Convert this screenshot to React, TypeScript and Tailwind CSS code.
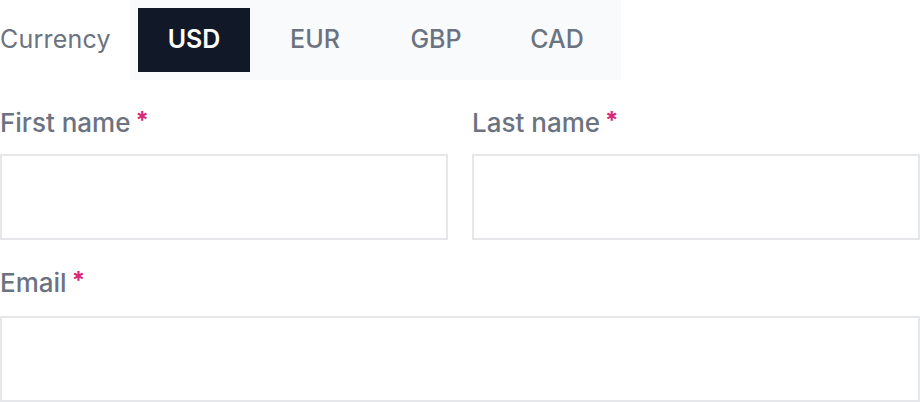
import React from "react";

const currencies = ["USD", "EUR", "GBP", "CAD"];

function Label({ text }: { text: string }) {
  return (
    <div className="flex items-center h-8 leading-8 text-[26px] font-medium text-[#6b7280]">
      <span>{text}</span>
      <span className="ml-[5px] text-[24px] leading-none -mt-[4px] text-[#db2777] font-bold">*</span>
    </div>
  );
}

export default function App() {
  return (
    <div className="w-[920px] h-[402px] bg-white overflow-hidden" style={{ fontFamily: "Inter, 'Noto Sans', sans-serif" }}>
      <div className="flex items-center h-20">
        <span className="text-[25px] tracking-[0.2px] text-[#6b7280] w-[130px]">Currency</span>
        <div className="flex gap-[9px] p-2 bg-[#f9fafb] h-20">
          {currencies.map((c, i) => (
            <div
              key={c}
              className={
                i === 0
                  ? "w-[112px] h-16 flex items-center justify-center bg-[#111827] text-white text-[25px] font-semibold"
                  : "w-[112px] h-16 flex items-center justify-center text-[#6b7280] text-[25px] font-medium"
              }
            >
              {c}
            </div>
          ))}
        </div>
      </div>
      <div className="grid grid-cols-2 gap-6 mt-[27px]">
        <div>
          <Label text="First name" />
          <div className="mt-[15px] h-[86px] border-2 border-[#e5e7eb] bg-white" />
        </div>
        <div>
          <Label text="Last name" />
          <div className="mt-[15px] h-[86px] border-2 border-[#e5e7eb] bg-white" />
        </div>
      </div>
      <div className="mt-[27px]">
        <Label text="Email" />
        <div className="mt-[17px] h-[86px] border-2 border-[#e5e7eb] bg-white" />
      </div>
    </div>
  );
}
